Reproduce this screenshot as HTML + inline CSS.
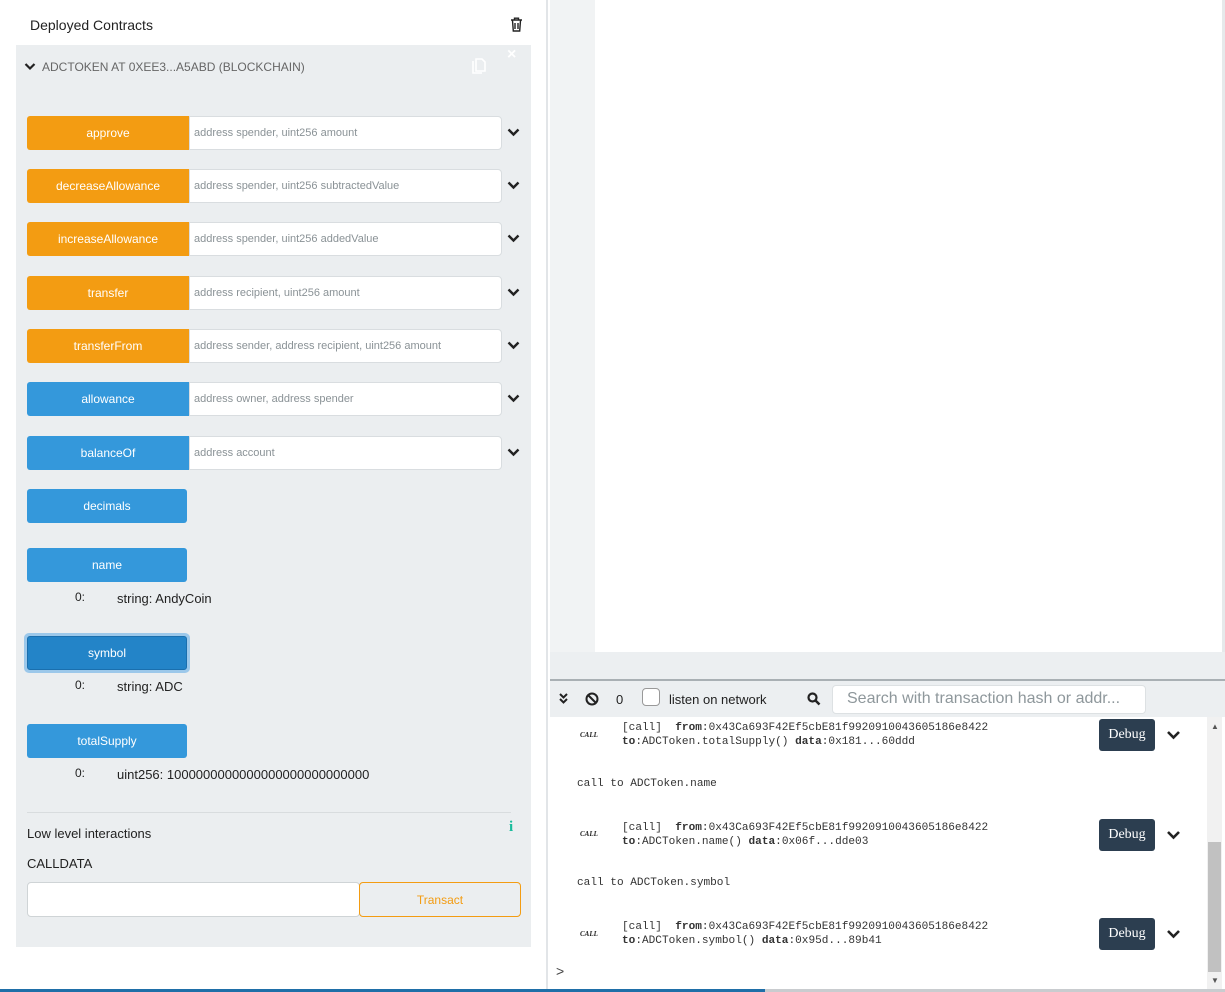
<!DOCTYPE html>
<html><head><meta charset="utf-8"><style>
*{box-sizing:border-box;margin:0;padding:0}
body{width:1225px;height:992px;overflow:hidden;background:#fff;font-family:"Liberation Sans",sans-serif;position:relative;color:#222}
.a{position:absolute}
.btn{position:absolute;left:27px;width:162px;height:34px;color:#fff;font-size:12px;display:flex;align-items:center;justify-content:center;border-radius:3px 0 0 3px}
.o{background:#f39c12}
.b{background:#3498db;border-radius:3px;width:160px}
.inp{position:absolute;left:189px;width:313px;height:34px;background:#fff;border:1px solid #d9dde0;border-radius:0 4px 4px 0;font-size:11px;color:#8a9296;padding-left:4px;display:flex;align-items:center}
.res{position:absolute;font-size:13px;color:#222}
.mono{font-family:"Liberation Mono","DejaVu Sans Mono",monospace;font-size:11.1px;color:#333}
.dbg{position:absolute;left:1099px;width:56px;height:32px;background:#2c3e50;color:#fff;border-radius:3px;font-family:"Liberation Serif",serif;font-size:14px;display:flex;align-items:center;justify-content:center}
.callt{position:absolute;left:580px;font-size:7px;font-style:italic;font-weight:bold;font-family:"Liberation Serif",serif}
</style></head><body>
<div class="a" style="left:546px;top:0;width:2px;height:992px;background:#e2e5e8"></div>
<div class="a" style="left:30px;top:17px;font-size:14px;color:#222">Deployed Contracts</div>
<svg class="a" style="left:510px;top:17px" width="13" height="15" viewBox="0 0 13 15"><path d="M1 3h11M4.5 3V1.2h4V3M2.5 3.5l.8 10.5h6.4l.8-10.5M5 6v6M8 6v6" stroke="#222" stroke-width="1.4" fill="none"/></svg>
<div class="a" style="left:16px;top:45px;width:515px;height:902px;background:#ebeef0"></div>
<svg class="a" style="left:24px;top:62px" width="12" height="9" viewBox="0 0 12 9"><path d="M1.5 2l4.5 4.5L10.5 2" stroke="#222" stroke-width="2.2" fill="none"/></svg>
<div class="a" style="left:42px;top:60px;font-size:12px;color:#666">ADCTOKEN AT 0XEE3...A5ABD (BLOCKCHAIN)</div>
<svg class="a" style="left:472px;top:58px" width="15" height="17" viewBox="0 0 15 17"><path d="M1 3v12h9M4 1h6l3 3v9H4z" stroke="#fff" stroke-width="1.6" fill="none"/></svg>
<div class="a" style="left:507px;top:46px;color:#fff;font-size:16px;font-weight:bold">×</div>

<div class="btn o" style="top:116px">approve</div><div class="inp" style="top:116px">address spender, uint256 amount</div>
<div class="btn o" style="top:169px">decreaseAllowance</div><div class="inp" style="top:169px">address spender, uint256 subtractedValue</div>
<div class="btn o" style="top:222px">increaseAllowance</div><div class="inp" style="top:222px">address spender, uint256 addedValue</div>
<div class="btn o" style="top:276px">transfer</div><div class="inp" style="top:276px">address recipient, uint256 amount</div>
<div class="btn o" style="top:329px">transferFrom</div><div class="inp" style="top:329px">address sender, address recipient, uint256 amount</div>
<div class="btn" style="top:382px;background:#3498db">allowance</div><div class="inp" style="top:382px">address owner, address spender</div>
<div class="btn" style="top:436px;background:#3498db">balanceOf</div><div class="inp" style="top:436px">address account</div>
<svg class="a" style="left:507px;top:128px" width="13" height="330" viewBox="0 0 13 330"><g stroke="#222" stroke-width="2.4" fill="none"><path d="M1.5 1.5l5 5 5-5"/><path d="M1.5 54.5l5 5 5-5"/><path d="M1.5 107.5l5 5 5-5"/><path d="M1.5 161.5l5 5 5-5"/><path d="M1.5 214.5l5 5 5-5"/><path d="M1.5 267.5l5 5 5-5"/><path d="M1.5 321.5l5 5 5-5"/></g></svg>

<div class="btn b" style="top:489px">decimals</div>
<div class="btn b" style="top:548px">name</div>
<div class="res" style="left:75px;top:590px;font-size:12px">0:</div><div class="res" style="left:117px;top:591px">string: AndyCoin</div>
<div class="a" style="left:24px;top:633px;width:166px;height:40px;border-radius:5px;background:#9cc8ea"></div>
<div class="btn b" style="top:636px;background:#2384c8;border:1px solid #1a6fae;left:27px;width:160px">symbol</div>
<div class="res" style="left:75px;top:678px;font-size:12px">0:</div><div class="res" style="left:117px;top:679px">string: ADC</div>
<div class="btn b" style="top:724px">totalSupply</div>
<div class="res" style="left:75px;top:766px;font-size:12px">0:</div><div class="res" style="left:117px;top:767px">uint256: 1000000000000000000000000000</div>
<div class="a" style="left:27px;top:812px;width:484px;height:1px;background:#d8dcde"></div>
<div class="a" style="left:27px;top:826px;font-size:13px">Low level interactions</div>
<div class="a" style="left:509px;top:819px;color:#1abc9c;font-weight:bold;font-size:15px;font-family:'Liberation Serif',serif">i</div>
<div class="a" style="left:27px;top:856px;font-size:13px">CALLDATA</div>
<div class="a" style="left:27px;top:882px;width:333px;height:35px;background:#fff;border:1px solid #cfd4d6;border-radius:4px"></div>
<div class="a" style="left:359px;top:882px;width:162px;height:35px;border:1px solid #f39c12;border-radius:4px;color:#f39c12;font-size:12px;display:flex;align-items:center;justify-content:center">Transact</div>

<div class="a" style="left:550px;top:0;width:45px;height:652px;background:#f1f3f4"></div>
<div class="a" style="left:1222px;top:0;width:3px;height:652px;background:#e6e9eb"></div>
<div class="a" style="left:550px;top:652px;width:675px;height:28px;background:#eceff1"></div>
<div class="a" style="left:550px;top:679px;width:675px;height:2px;background:#a9b0b4"></div>
<div class="a" style="left:550px;top:681px;width:675px;height:36px;background:#eceff1"></div>
<svg class="a" style="left:558px;top:693px" width="11" height="11" viewBox="0 0 11 11"><path d="M2 1l3.5 3.5L9 1M2 6l3.5 3.5L9 6" stroke="#222" stroke-width="2" fill="none"/></svg>
<svg class="a" style="left:585px;top:692px" width="14" height="14" viewBox="0 0 14 14"><circle cx="7" cy="7" r="5.5" stroke="#222" stroke-width="2" fill="none"/><path d="M3 3l8 8" stroke="#222" stroke-width="2"/></svg>
<div class="a" style="left:616px;top:692px;font-size:13px">0</div>
<div class="a" style="left:642px;top:688px;width:18px;height:18px;border:1px solid #999;border-radius:4px;background:#fff"></div>
<div class="a" style="left:669px;top:692px;font-size:13px">listen on network</div>
<svg class="a" style="left:807px;top:692px" width="14" height="14" viewBox="0 0 14 14"><circle cx="5.5" cy="5.5" r="4" stroke="#222" stroke-width="2.2" fill="none"/><path d="M8.5 8.5l4 4" stroke="#222" stroke-width="2.5"/></svg>
<div class="a" style="left:832px;top:685px;width:314px;height:29px;background:#fff;border:1px solid #dde1e3;border-radius:4px;color:#8e979b;font-size:16px;padding:4px 0 0 14px">Search with transaction hash or addr...</div>

<div class="a" style="left:1207px;top:717px;width:15px;height:273px;background:#f1f1f1"></div>
<div class="a" style="left:1208px;top:842px;width:13px;height:130px;background:#c1c1c1"></div>
<div class="a" style="left:1211px;top:722px;font-size:8px;color:#555">▲</div>
<div class="a" style="left:1211px;top:976px;font-size:8px;color:#555">▼</div>

<div class="callt" style="top:731px">CALL</div>
<div class="a mono" style="left:622px;top:721px;line-height:14px">[call]&nbsp; <b>from</b>:0x43Ca693F42Ef5cbE81f9920910043605186e8422<br><b>to</b>:ADCToken.totalSupply() <b>data</b>:0x181...60ddd</div>
<div class="dbg" style="top:719px">Debug</div>
<div class="a mono" style="left:577px;top:778px">call to ADCToken.name</div>
<div class="callt" style="top:830px">CALL</div>
<div class="a mono" style="left:622px;top:821px;line-height:14px">[call]&nbsp; <b>from</b>:0x43Ca693F42Ef5cbE81f9920910043605186e8422<br><b>to</b>:ADCToken.name() <b>data</b>:0x06f...dde03</div>
<div class="dbg" style="top:819px">Debug</div>
<div class="a mono" style="left:577px;top:877px">call to ADCToken.symbol</div>
<div class="callt" style="top:930px">CALL</div>
<div class="a mono" style="left:622px;top:920px;line-height:14px">[call]&nbsp; <b>from</b>:0x43Ca693F42Ef5cbE81f9920910043605186e8422<br><b>to</b>:ADCToken.symbol() <b>data</b>:0x95d...89b41</div>
<div class="dbg" style="top:918px">Debug</div>
<svg class="a" style="left:1166px;top:730px" width="15" height="220" viewBox="0 0 15 220"><g stroke="#222" stroke-width="2.6" fill="none"><path d="M2 2l5.5 5.5L13 2"/><path d="M2 102l5.5 5.5L13 102"/><path d="M2 201l5.5 5.5L13 201"/></g></svg>
<div class="a" style="left:556px;top:963px;font-size:14px;color:#444">&gt;</div>
<div class="a" style="left:0;top:989px;width:765px;height:3px;background:#1f6fa8"></div>
<div class="a" style="left:765px;top:989px;width:460px;height:3px;background:#c9cccf"></div>
</body></html>
